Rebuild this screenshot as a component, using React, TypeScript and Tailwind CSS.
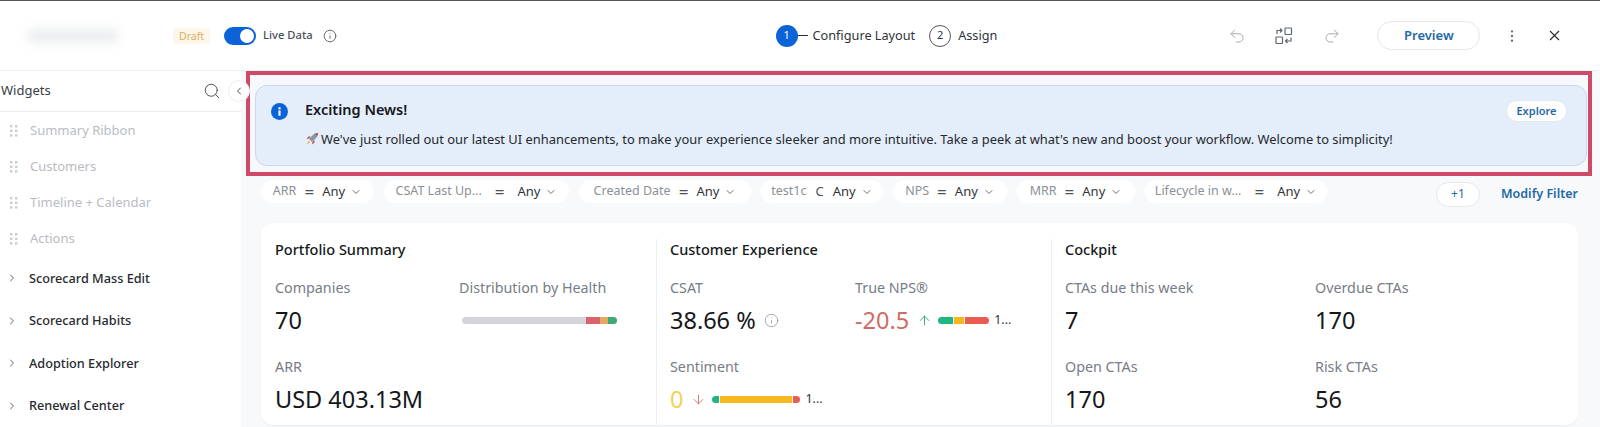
import { ChevronDown, ChevronLeft, ChevronRight, Info, MoreVertical, Redo2, Search, Undo2, X, ArrowUp, ArrowDown } from 'lucide-react';

const disabledWidgets = ['Summary Ribbon', 'Customers', 'Timeline + Calendar', 'Actions'];
const groups = ['Scorecard Mass Edit', 'Scorecard Habits', 'Adoption Explorer', 'Renewal Center'];

const filters = [
  { label: 'ARR', op: '=', width: 'w-[113px]', gap: 'gap-[8px]', opSize: 'text-[17px]' },
  { label: 'CSAT Last Up...', op: '=', width: 'w-[185px]', gap: 'gap-[13px]', opSize: 'text-[17px]' },
  { label: 'Created Date', op: '=', width: 'w-[172px]', gap: 'gap-[8px]', opSize: 'text-[17px]' },
  { label: 'test1c', op: 'C', width: 'w-[122px]', gap: 'gap-[9px]', opSize: 'text-[13px]' },
  { label: 'NPS', op: '=', width: 'w-[114px]', gap: 'gap-[8px]', opSize: 'text-[17px]' },
  { label: 'MRR', op: '=', width: 'w-[118px]', gap: 'gap-[8px]', opSize: 'text-[17px]' },
  { label: 'Lifecycle in w...', op: '=', width: 'w-[182px]', gap: 'gap-[13px]', opSize: 'text-[17px]' },
];

function GripDots() {
  return (
    <svg width="8" height="12" viewBox="0 0 8 12" className="fill-[#c9ccd1]">
      <rect x="0" y="0" width="2.4" height="2.4" />
      <rect x="5" y="0" width="2.4" height="2.4" />
      <rect x="0" y="4.6" width="2.4" height="2.4" />
      <rect x="5" y="4.6" width="2.4" height="2.4" />
      <rect x="0" y="9.2" width="2.4" height="2.4" />
      <rect x="5" y="9.2" width="2.4" height="2.4" />
    </svg>
  );
}

function Rocket() {
  return (
    <svg width="14" height="14" viewBox="0 0 14 14" className="shrink-0">
      <path d="M4 7 L9 2 Q11 1 13 1 Q13 3 12 5 L7 10 Z" fill="#8a95a8" />
      <path d="M10 2 Q11.5 1 13 1 Q13 2.5 12 4 Z" fill="#c8463c" />
      <path d="M4 6.5 L1.5 7 L3.5 4.5 L6 4.5 Z" fill="#c8463c" />
      <path d="M7.5 10 L7 12.5 L9.5 10.5 L9.5 8 Z" fill="#c8463c" />
      <path d="M4 9 L1 13 L5 10 Z" fill="#f0a030" />
    </svg>
  );
}

function SwapLayout() {
  return (
    <svg width="20" height="20" viewBox="0 0 20 20" fill="none" stroke="#5f6670" strokeWidth="1.2">
      <rect x="11" y="2" width="6.5" height="6.5" rx="0.5" />
      <rect x="2" y="11" width="6.5" height="6.5" rx="0.5" />
      <path d="M3 8 V4.5 H8 M6 2.5 L8 4.5 L6 6.5" />
      <path d="M17 11.5 V15 H11.5 M13.5 13 L11.5 15 L13.5 17" />
    </svg>
  );
}

function Metric({ label, className, children }: { label: string; className?: string; children: React.ReactNode }) {
  return (
    <div className={className}>
      <div className="text-[14.3px] leading-5 text-[#777c85]">{label}</div>
      <div className="mt-[6px] flex h-[32px] items-center text-[23.5px] leading-8 text-[#15171a]">{children}</div>
    </div>
  );
}

export default function App() {
  return (
    <div className="flex h-[427px] w-[1600px] flex-col overflow-hidden border-t border-[#555] bg-white font-['Noto_Sans',sans-serif]">
      <header className="flex h-[69px] shrink-0 items-center">
        <div className="ml-[28px] h-[14px] w-[90px] rounded bg-[#eceef0] blur-[5px]" />
        <span className="ml-[55px] rounded bg-[#fdf7ea] px-[6px] text-[10.5px] leading-[16px] text-[#d8ae66]">Draft</span>
        <div className="ml-[14px] flex h-[18px] w-[32px] items-center justify-end rounded-full bg-[#0c63d8] pr-[2px]">
          <div className="h-[14px] w-[14px] rounded-full bg-white" />
        </div>
        <span className="ml-[7px] text-[11.2px] font-medium text-[#4b5058]">Live Data</span>
        <Info size={14} strokeWidth={1.4} className="ml-[10px] text-[#4b5058]" />

        <div className="ml-[439px] flex items-center">
          <div className="flex h-[22px] w-[22px] items-center justify-center rounded-full bg-[#0c63d8] text-[11px] text-white">1</div>
          <div className="h-[1.5px] w-[10px] bg-[#30343a]" />
          <span className="ml-[5px] text-[12.7px] text-[#30343a]">Configure Layout</span>
          <div className="ml-[14px] flex h-[22px] w-[22px] items-center justify-center rounded-full border border-[#50555c] text-[11px] text-[#30343a]">2</div>
          <span className="ml-[7px] text-[12.7px] text-[#30343a]">Assign</span>
        </div>

        <Undo2 size={18} strokeWidth={1.3} className="ml-[231px] text-[#a4a8ae]" />
        <div className="ml-[28px]"><SwapLayout /></div>
        <Redo2 size={18} strokeWidth={1.3} className="ml-[29px] text-[#a4a8ae]" />
        <button className="ml-[36px] h-[29px] w-[103px] rounded-full border border-[#e4e7eb] text-[13px] font-semibold text-[#1f6aa5]">Preview</button>
        <MoreVertical size={16} strokeWidth={1.6} className="ml-[24px] text-[#6b7077]" />
        <X size={17} strokeWidth={1.5} className="ml-[26px] text-[#25282c]" />
      </header>

      <div className="flex min-h-0 flex-1 border-t border-[#eef0f2]">
        <aside className="relative w-[241px] shrink-0 bg-white">
          <div className="flex h-[41px] items-center justify-between border-b border-[#e8eaed] pr-[20px] pl-[1px]">
            <span className="text-[13px] text-[#3a3e44]">Widgets</span>
            <Search size={18} strokeWidth={1.3} className="text-[#4b5058]" />
          </div>
          <div className="absolute top-[9px] -right-[9px] flex h-[22px] w-[22px] items-center justify-center rounded-full border border-[#eceef0] bg-white">
            <ChevronLeft size={12} className="text-[#4b5058]" />
          </div>
          <ul className="mt-[1px]">
            {disabledWidgets.map((name) => (
              <li key={name} className="flex h-[36px] items-center gap-[12px] pl-[10px] text-[13px] text-[#b9bcc2]">
                <GripDots />
                {name}
              </li>
            ))}
          </ul>
          <ul>
            {groups.map((name) => (
              <li key={name} className="flex h-[42.5px] items-center gap-[11px] pl-[6px] text-[12.7px] font-medium text-[#26292e]">
                <ChevronRight size={12} className="text-[#5f6670]" />
                {name}
              </li>
            ))}
          </ul>
        </aside>

        <main className="flex min-w-0 flex-1 flex-col bg-[#f7f9fb] pl-[5px] pr-[8px]">
          <section className="h-[105px] shrink-0 border-[4px] border-[#cf4a68] bg-[#f6f8fb] pt-[10px] pr-[1px] pb-[5px] pl-[5px]">
            <div className="flex h-[81px] rounded-xl border border-[#ccd7e8] bg-[#e4eefb] pr-[19px] pl-[15px]">
              <svg width="17" height="17" viewBox="0 0 16 16" className="mt-[17px] shrink-0">
                <circle cx="8" cy="8" r="8" fill="#0c63d8" />
                <rect x="7" y="7" width="2" height="5" fill="#fff" />
                <rect x="7" y="4" width="2" height="2" fill="#fff" />
              </svg>
              <div className="ml-[17px] flex-1">
                <div className="mt-[13px] text-[14.5px] leading-5 font-semibold text-[#16181b]">Exciting News!</div>
                <div className="mt-[10px] flex items-center gap-[2px] text-[12.9px] leading-5 text-[#26292e]">
                  <Rocket />
                  <span>We've just rolled out our latest UI enhancements, to make your experience sleeker and more intuitive. Take a peek at what's new and boost your workflow. Welcome to simplicity!</span>
                </div>
              </div>
              <button className="mt-[14px] h-[22px] w-[61px] rounded-full border border-[#e4e7eb] bg-white text-[11px] font-semibold text-[#1f6aa5]">Explore</button>
            </div>
          </section>

          <div className="mt-[4px] mr-[14px] ml-[15px] flex h-[28px] shrink-0 items-center">
            <div className="flex gap-[10px] self-start">
              {filters.map((f) => (
                <div key={f.label} className={`flex h-[23px] items-center justify-center rounded-full bg-white text-[12.5px] ${f.width} ${f.gap}`}>
                  <span className="text-[#8b9097]">{f.label}</span>
                  <span className={`leading-none text-[#4b5058] ${f.opSize}`}>{f.op}</span>
                  <span className="flex items-center gap-[5px] text-[13px] text-[#30343a]">
                    Any
                    <ChevronDown size={12} className="text-[#6b7077]" />
                  </span>
                </div>
              ))}
            </div>
            <button className="ml-auto h-[25px] w-[44px] rounded-full border border-[#e4e7eb] bg-white text-[12px] text-[#1f6aa5]">+1</button>
            <span className="ml-[21px] text-[12.5px] font-semibold text-[#1f6aa5]">Modify Filter</span>
          </div>

          <div className="mt-[15px] mr-[14px] ml-[15px] grid h-[202px] shrink-0 grid-cols-[395px_395px_1fr] rounded-xl bg-white pt-[16px] shadow-[0_1px_2px_rgba(0,0,0,0.06)]">
            <div className="pl-[14px]">
              <h3 className="text-[14.5px] leading-5 font-medium text-[#16181b]">Portfolio Summary</h3>
              <div className="mt-[19px] grid grid-cols-[184px_1fr] gap-y-[21px]">
                <Metric label="Companies">70</Metric>
                <Metric label="Distribution by Health">
                  <div className="ml-[3px] flex h-[7px] w-[155px] overflow-hidden rounded-full">
                    <div className="w-[124px] bg-[#d3d5da]" />
                    <div className="w-[14px] bg-[#d9626c]" />
                    <div className="w-[8px] bg-[#e3a95c]" />
                    <div className="w-[9px] bg-[#3fa873]" />
                  </div>
                </Metric>
                <Metric label="ARR" className="col-span-2">USD 403.13M</Metric>
              </div>
            </div>

            <div className="border-l border-[#eceef0] pl-[13px]">
              <h3 className="text-[14.5px] leading-5 font-medium text-[#16181b]">Customer Experience</h3>
              <div className="mt-[19px] grid grid-cols-[185px_1fr] gap-y-[21px]">
                <Metric label="CSAT">
                  38.66 %
                  <Info size={15} strokeWidth={1.2} className="ml-[8px] text-[#8b9097]" />
                </Metric>
                <Metric label="True NPS®">
                  <span className="text-[#cf6b66]">-20.5</span>
                  <ArrowUp size={15} strokeWidth={1.5} className="ml-[8px] text-[#2fa87a]" />
                  <div className="ml-[6px] flex h-[7px] w-[51px] gap-[1px] overflow-hidden rounded-full">
                    <div className="w-[15px] bg-[#1fb77e]" />
                    <div className="w-[10px] bg-[#f5b91d]" />
                    <div className="w-[24px] bg-[#ea5b54]" />
                  </div>
                  <span className="ml-[5px] text-[12.5px] text-[#30343a]">1...</span>
                </Metric>
                <Metric label="Sentiment" className="col-span-2">
                  <span className="text-[#ecd457]">0</span>
                  <ArrowDown size={15} strokeWidth={1.5} className="ml-[8px] text-[#d4736b]" />
                  <div className="ml-[6px] flex h-[7px] w-[88px] gap-[1px] overflow-hidden rounded-full">
                    <div className="w-[7px] bg-[#1fb77e]" />
                    <div className="w-[72px] bg-[#f5b91d]" />
                    <div className="w-[7px] bg-[#ea5b54]" />
                  </div>
                  <span className="ml-[5px] text-[12.5px] text-[#30343a]">1...</span>
                </Metric>
              </div>
            </div>

            <div className="border-l border-[#eceef0] pl-[13px]">
              <h3 className="text-[14.5px] leading-5 font-medium text-[#16181b]">Cockpit</h3>
              <div className="mt-[19px] grid grid-cols-[250px_1fr] gap-y-[21px]">
                <Metric label="CTAs due this week">7</Metric>
                <Metric label="Overdue CTAs">170</Metric>
                <Metric label="Open CTAs">170</Metric>
                <Metric label="Risk CTAs">56</Metric>
              </div>
            </div>
          </div>
        </main>
      </div>
    </div>
  );
}
